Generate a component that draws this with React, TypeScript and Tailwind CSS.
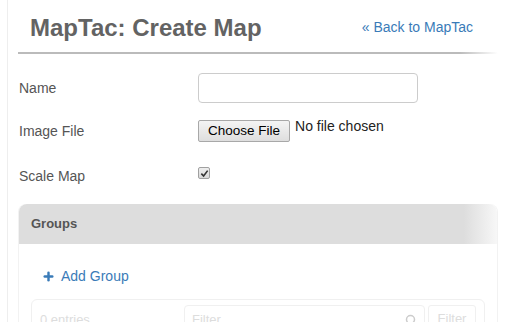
import { Plus, Search } from "lucide-react";

export default function App() {
    return (
        <div className="h-[322px] w-[520px] overflow-hidden bg-white font-['Liberation_Sans',Arial,sans-serif] text-[14px] text-[#333]">
            <div className="ml-[7px] h-full border-l border-[#eee] pl-[10px] pr-[22px]">

                {/* Header */}
                <div className="flex h-[54px] items-center justify-between bg-[linear-gradient(to_right,#bbb_92%,#fff)] bg-[length:100%_2px] bg-bottom bg-no-repeat pb-[1px]">
                    <h1 className="pl-[12px] pt-[2px] text-[24px] font-bold leading-none text-[#636363]">MapTac: Create Map</h1>
                    <a href="#" className="mr-[25px] pt-[2px] text-[14px] text-[#3a7bb8]">&laquo; Back to MapTac</a>
                </div>

                {/* Form */}
                <div className="mt-[19px] flex flex-col">
                    <div className="flex h-[30px] items-center">
                        <label className="w-[180px] pl-px text-[#555]">Name</label>
                        <input type="text" className="h-[30px] w-[220px] rounded-[4px] border border-[#ccc] bg-white px-2" />
                    </div>
                    <div className="mt-[17px] flex h-[22px] items-center">
                        <label className="w-[180px] pl-px text-[#555]">Image File</label>
                        <div className="flex items-start">
                            <button className="h-[22px] rounded-[2px] border border-[#a8a8a8] bg-[linear-gradient(#f4f4f4,#dedede)] px-[9px] text-[13.5px] text-black">Choose File</button>
                            <span className="-mt-[4px] ml-[5px] text-[14px] text-[#222]">No file chosen</span>
                        </div>
                    </div>
                    <div className="mt-[24px] flex h-[20px] items-center">
                        <label className="w-[180px] pl-px text-[#555]">Scale Map</label>
                        <span className="-mt-[6px] flex h-[12px] w-[12px] items-center justify-center rounded-[2px] border border-[#a0a0a0] bg-[linear-gradient(#eee,#d8d8d8)]">
                            <svg viewBox="0 0 10 10" className="h-[9px] w-[9px]">
                                <path d="M1.5 5.2 L4 7.8 L8.5 1.8" fill="none" stroke="#333" strokeWidth="1.8" />
                            </svg>
                        </span>
                    </div>
                </div>

                {/* Groups panel */}
                <div className="mt-[18px] rounded-t-[8px] border-x border-[#f2f2f2]">
                    <div className="flex h-[40px] items-center rounded-t-[8px] bg-[linear-gradient(to_right,#ddd_93%,#f7f7f7)] px-[12px]">
                        <span className="text-[13px] font-bold text-[#555]">Groups</span>
                    </div>
                    <div className="px-[12px] pt-[22px]">
                        <a href="#" className="ml-[11px] flex items-center gap-[6px] text-[14px] text-[#3a7bb8]">
                            <Plus className="h-[13px] w-[13px]" strokeWidth={4.5} />
                            Add Group
                        </a>
                        <div className="mt-[12px] flex h-[40px] items-start rounded-[6px] border border-[#f0f0f0] px-[8px] pt-[5px] text-[#ddd]">
                            <span className="w-[144px] pt-[5px] text-[13px]">0 entries</span>
                            <div className="flex h-[30px] w-[241px] items-center justify-between rounded-[4px] border border-[#f0f0f0] px-[7px]">
                                <span className="text-[13px]">Filter</span>
                                <Search className="h-[12px] w-[12px] text-[#ccc]" strokeWidth={3} />
                            </div>
                            <div className="ml-[3px] flex h-[28px] w-[48px] items-center justify-center rounded-[3px] border border-[#f0f0f0] text-[13px]">Filter</div>
                        </div>
                    </div>
                </div>
            </div>
        </div>
    );
}
